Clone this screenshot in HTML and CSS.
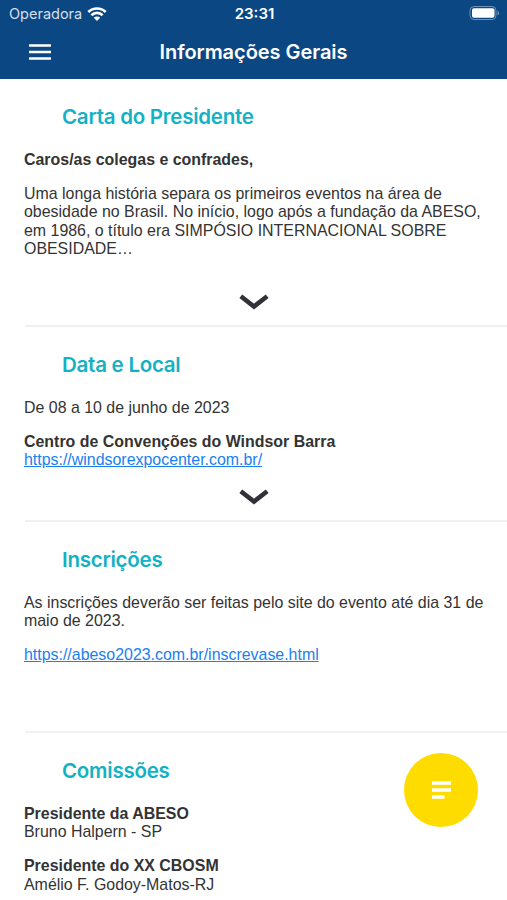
FILE: index.html
```
<!DOCTYPE html>
<html lang="pt-BR">
  <head>
    <meta charset="utf-8">
    <title>Informações Gerais</title>
    <link rel="stylesheet" href="styles.css">
  </head>
  <body>
    <header class="header">
      <div class="status-bar">
        <div class="carrier">
          <span class="carrier-name">Operadora</span>
          <svg class="wifi" viewBox="0 0 20 14" width="20" height="14">
            <path d="M1.3 5a12.4 12.4 0 0 1 17.4 0M4.4 8.2a8 8 0 0 1 11.2 0" fill="none" stroke="#fff" stroke-width="2.6"/>
            <path d="M6.8 10.7a4.6 4.6 0 0 1 6.4 0L10 13.9z" fill="#fff"/>
          </svg>
        </div>
        <span class="clock">23:31</span>
        <svg class="battery" viewBox="0 0 31 14" width="31" height="14">
          <rect x="1" y="0.5" width="26" height="13" rx="4" fill="none" stroke="#6f92b6"/>
          <rect x="3" y="2.3" width="22.5" height="9.4" rx="2" fill="#fff"/>
          <path d="M28.5 4.7c2.2.8 2.2 3.8 0 4.6z" fill="#6f92b6"/>
        </svg>
      </div>
      <div class="nav-bar">
        <button class="menu-button" aria-label="Menu">
          <svg viewBox="0 0 22 16" width="22" height="16">
            <path d="M0 1.5h22M0 8h22M0 14.5h22" stroke="#fff" stroke-width="2.7"/>
          </svg>
        </button>
        <h1 class="title">Informações Gerais</h1>
      </div>
    </header>

    <main class="content">
      <section class="card letter">
        <h2>Carta do Presidente</h2>
        <p><b>Caros/as colegas e confrades,</b></p>
        <p>Uma longa história separa os primeiros eventos na área de<br>obesidade no Brasil. No início, logo após a fundação da ABESO,<br>em 1986, o título era SIMPÓSIO INTERNACIONAL SOBRE<br>OBESIDADE…</p>
        <svg class="chevron" viewBox="0 0 30 16" width="30" height="16">
          <path d="M1.8 2.2L15 12.5 28.2 2.2" fill="none" stroke="#333138" stroke-width="4.6"/>
        </svg>
      </section>

      <section class="card place">
        <h2>Data e Local</h2>
        <p>De 08 a 10 de junho de 2023</p>
        <p><b>Centro de Convenções do Windsor Barra</b><br><a href="#">https://windsorexpocenter.com.br/</a></p>
        <svg class="chevron" viewBox="0 0 30 16" width="30" height="16">
          <path d="M1.8 2.2L15 12.5 28.2 2.2" fill="none" stroke="#333138" stroke-width="4.6"/>
        </svg>
      </section>

      <section class="card signup">
        <h2>Inscrições</h2>
        <p>As inscrições deverão ser feitas pelo site do evento até dia 31 de<br>maio de 2023.</p>
        <p><a href="#">https://abeso2023.com.br/inscrevase.html</a></p>
      </section>

      <section class="card committees">
        <h2>Comissões</h2>
        <p><b>Presidente da ABESO</b><br>Bruno Halpern - SP</p>
        <p><b>Presidente do XX CBOSM</b><br>Amélio F. Godoy-Matos-RJ</p>
      </section>
    </main>

    <button class="fab" aria-label="Opções">
      <svg viewBox="0 0 19 18" width="19" height="18">
        <path d="M0 2h19M0 9h19M0 16h12.5" stroke="#fff" stroke-width="3.4"/>
      </svg>
    </button>
  </body>
</html>
```
FILE: styles.css
```
* {
  box-sizing: border-box;
}

body {
  margin: 0;
  height: 900px;
  overflow: hidden;
  background: #fff;
  color: #333;
  font-family: "Liberation Sans", Arial, sans-serif;
}

.header {
  height: 79px;
  background: #0b4883;
  color: #fff;
  font-family: Inter, sans-serif;
}

.status-bar {
  display: grid;
  grid-template-columns: 1fr auto 1fr;
  align-items: center;
  height: 27px;
  padding: 0 7px 0 9px;
}

.carrier {
  display: flex;
  align-items: center;
  gap: 5px;
}

.carrier-name {
  font-size: 14.5px;
  color: #d5dfea;
}

.clock {
  font-size: 15px;
  font-weight: 600;
}

.battery {
  justify-self: end;
  margin-top: -1px;
}

.nav-bar {
  display: grid;
  grid-template-columns: 80px 1fr 80px;
  align-items: center;
  height: 50px;
}

.menu-button {
  display: flex;
  padding: 0 0 0 29px;
  border: none;
  background: none;
}

.title {
  margin: 0;
  text-align: center;
  font-size: 20px;
  font-weight: 600;
  letter-spacing: -0.05px;
  white-space: nowrap;
}

.card {
  margin-left: 25px;
  border-bottom: 2px solid #f1f1f3;
}

.card h2 {
  margin: 0 0 20px 37px;
  padding-top: 24px;
  color: #12b1c3;
  font-family: Inter, sans-serif;
  font-size: 20.5px;
  font-weight: 600;
  letter-spacing: -0.25px;
  line-height: 28px;
}

.card p {
  margin: 0 0 15.7px -1px;
  font-size: 15.93px;
  line-height: 18.3px;
  white-space: nowrap;
}

.card a {
  color: #1a80f2;
}

.chevron {
  display: block;
  margin-left: 214px;
}

.letter {
  height: 248px;
}

.letter .chevron {
  margin-top: 36px;
}

.place {
  height: 195px;
}

.place .chevron {
  margin-top: 19px;
}

.signup {
  height: 211px;
}

.committees {
  border-bottom: none;
}

.fab {
  position: fixed;
  top: 753px;
  left: 404px;
  display: flex;
  align-items: center;
  justify-content: center;
  width: 74px;
  height: 74px;
  border: none;
  border-radius: 50%;
  background: #ffdc00;
}
```
